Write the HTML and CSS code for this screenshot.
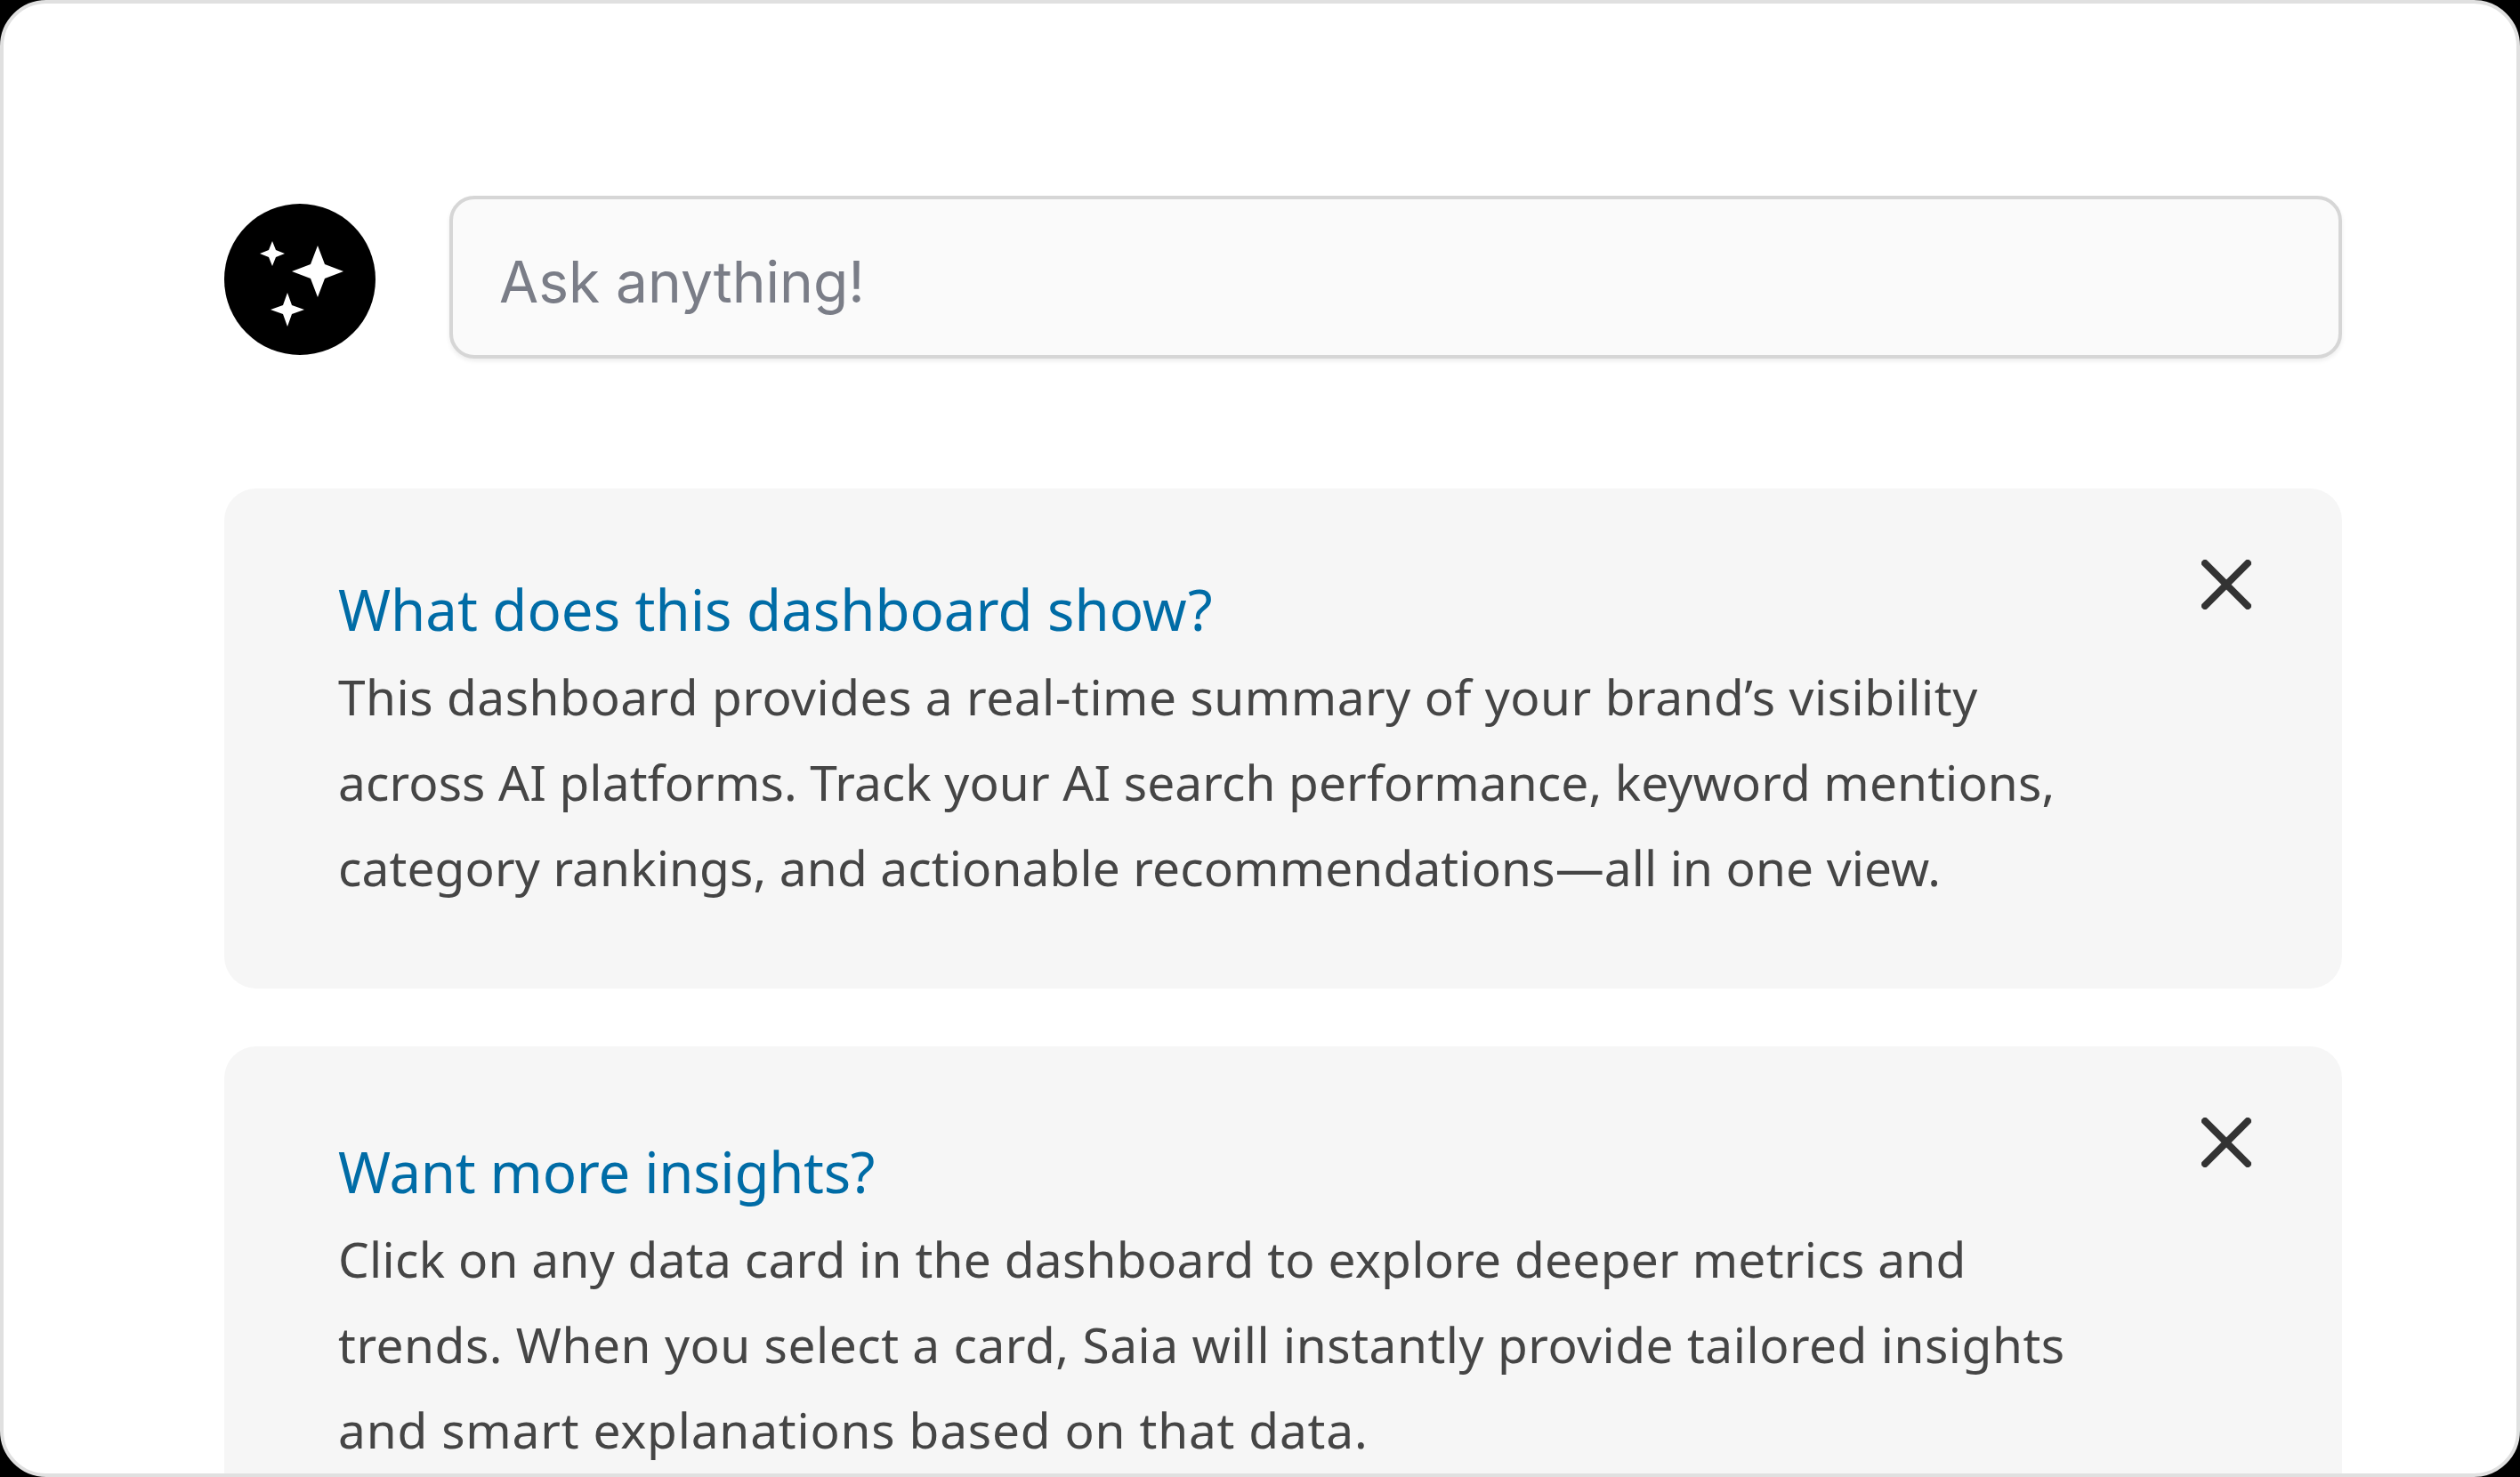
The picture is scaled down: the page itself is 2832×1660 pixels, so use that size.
FILE: index.html
```html
<!DOCTYPE html>
<html lang="en">
<head>
<meta charset="utf-8">
<title>Ask anything</title>
<link rel="stylesheet" href="styles.css">
</head>
<body>
<main class="frame">
  <div class="ask-row">
    <div class="avatar">
      <svg class="sparkles" viewBox="0 0 170 170" aria-hidden="true">
        <path d="M105 47 L113 68 L134 76 L113 84 L105 105 L97 84 L76 76 L97 68Z"/>
        <path d="M54 42 L58 52 L68 56 L58 60 L54 70 L50 60 L40 56 L50 52Z"/>
        <path d="M71 100 L76 114 L90 119 L76 124 L71 138 L66 124 L52 119 L66 114Z"/>
      </svg>
    </div>
    <div class="ask-input">Ask anything!</div>
  </div>
  <section class="card">
    <div class="card-text">
      <h2 class="card-title">What does this dashboard show?</h2>
      <p class="card-body"><span class="wide">This dashboard provides a real-time summary of your brand’s visibility</span><br>across AI platforms. Track your AI search performance, keyword mentions,<br>category rankings, and actionable recommendations—all in one view.</p>
    </div>
    <svg class="close" viewBox="0 0 56 56" aria-hidden="true"><path d="M4 4 L52 52 M52 4 L4 52"/></svg>
  </section>
  <section class="card card-lower">
    <div class="card-text">
      <h2 class="card-title">Want more insights?</h2>
      <p class="card-body"><span class="slight">Click on any data card in the dashboard to explore deeper metrics and</span><br><span class="wide">trends. When you select a card, Saia will instantly provide tailored insights</span><br><span class="wider">and smart explanations based on that data.</span></p>
    </div>
    <svg class="close" viewBox="0 0 56 56" aria-hidden="true"><path d="M4 4 L52 52 M52 4 L4 52"/></svg>
  </section>
</main>
</body>
</html>
```
FILE: styles.css
```css
* { box-sizing: border-box; }
html, body { margin: 0; height: 100%; background: #000; overflow: hidden; }
.frame {
  width: 2832px;
  height: 1660px;
  background: #fff;
  border: 4px solid #e0e0e0;
  border-radius: 52px;
  padding: 216px 196px 0 248px;
  overflow: hidden;
}
.ask-row { display: flex; align-items: center; gap: 83px; margin-bottom: 146px; }
.avatar {
  flex: none;
  width: 170px;
  height: 170px;
  margin-top: 4px;
  border-radius: 50%;
  background: #000;
}
.sparkles { display: block; width: 170px; height: 170px; fill: #fff; }
.ask-input {
  flex: 1;
  height: 183px;
  border: 4px solid #d6d6d6;
  border-radius: 28px;
  background: #fafafa;
  box-shadow: 0 3px 5px rgba(0,0,0,.07);
  padding: 10px 52px 0;
  display: flex;
  align-items: center;
  font: 400 64px Inter, sans-serif;
  color: #7a7d87;
}
.card {
  display: flex;
  justify-content: space-between;
  align-items: flex-start;
  background: #f6f6f6;
  border-radius: 36px;
  height: 562px;
  padding: 80px 102px 0 128px;
  margin-bottom: 65px;
}
.card-text { margin-top: 16px; }
.card-lower .card-text { margin-top: 21px; }
.card-title {
  margin: 0 0 10px;
  font: 400 63.5px/80px "Noto Sans", sans-serif;
  color: #006ca6;
}
.card-lower .card-title { letter-spacing: -.3px; }
.card-body {
  margin: 0;
  font: 400 55px/96px "Noto Sans", sans-serif;
  letter-spacing: .12px;
  color: #454545;
}
.slight { letter-spacing: .28px; }
.wide { letter-spacing: .52px; }
.wider { letter-spacing: .8px; }
.close {
  flex: none;
  width: 56px;
  height: 56px;
  fill: none;
  stroke: #333;
  stroke-width: 8px;
  stroke-linecap: round;
}
```
